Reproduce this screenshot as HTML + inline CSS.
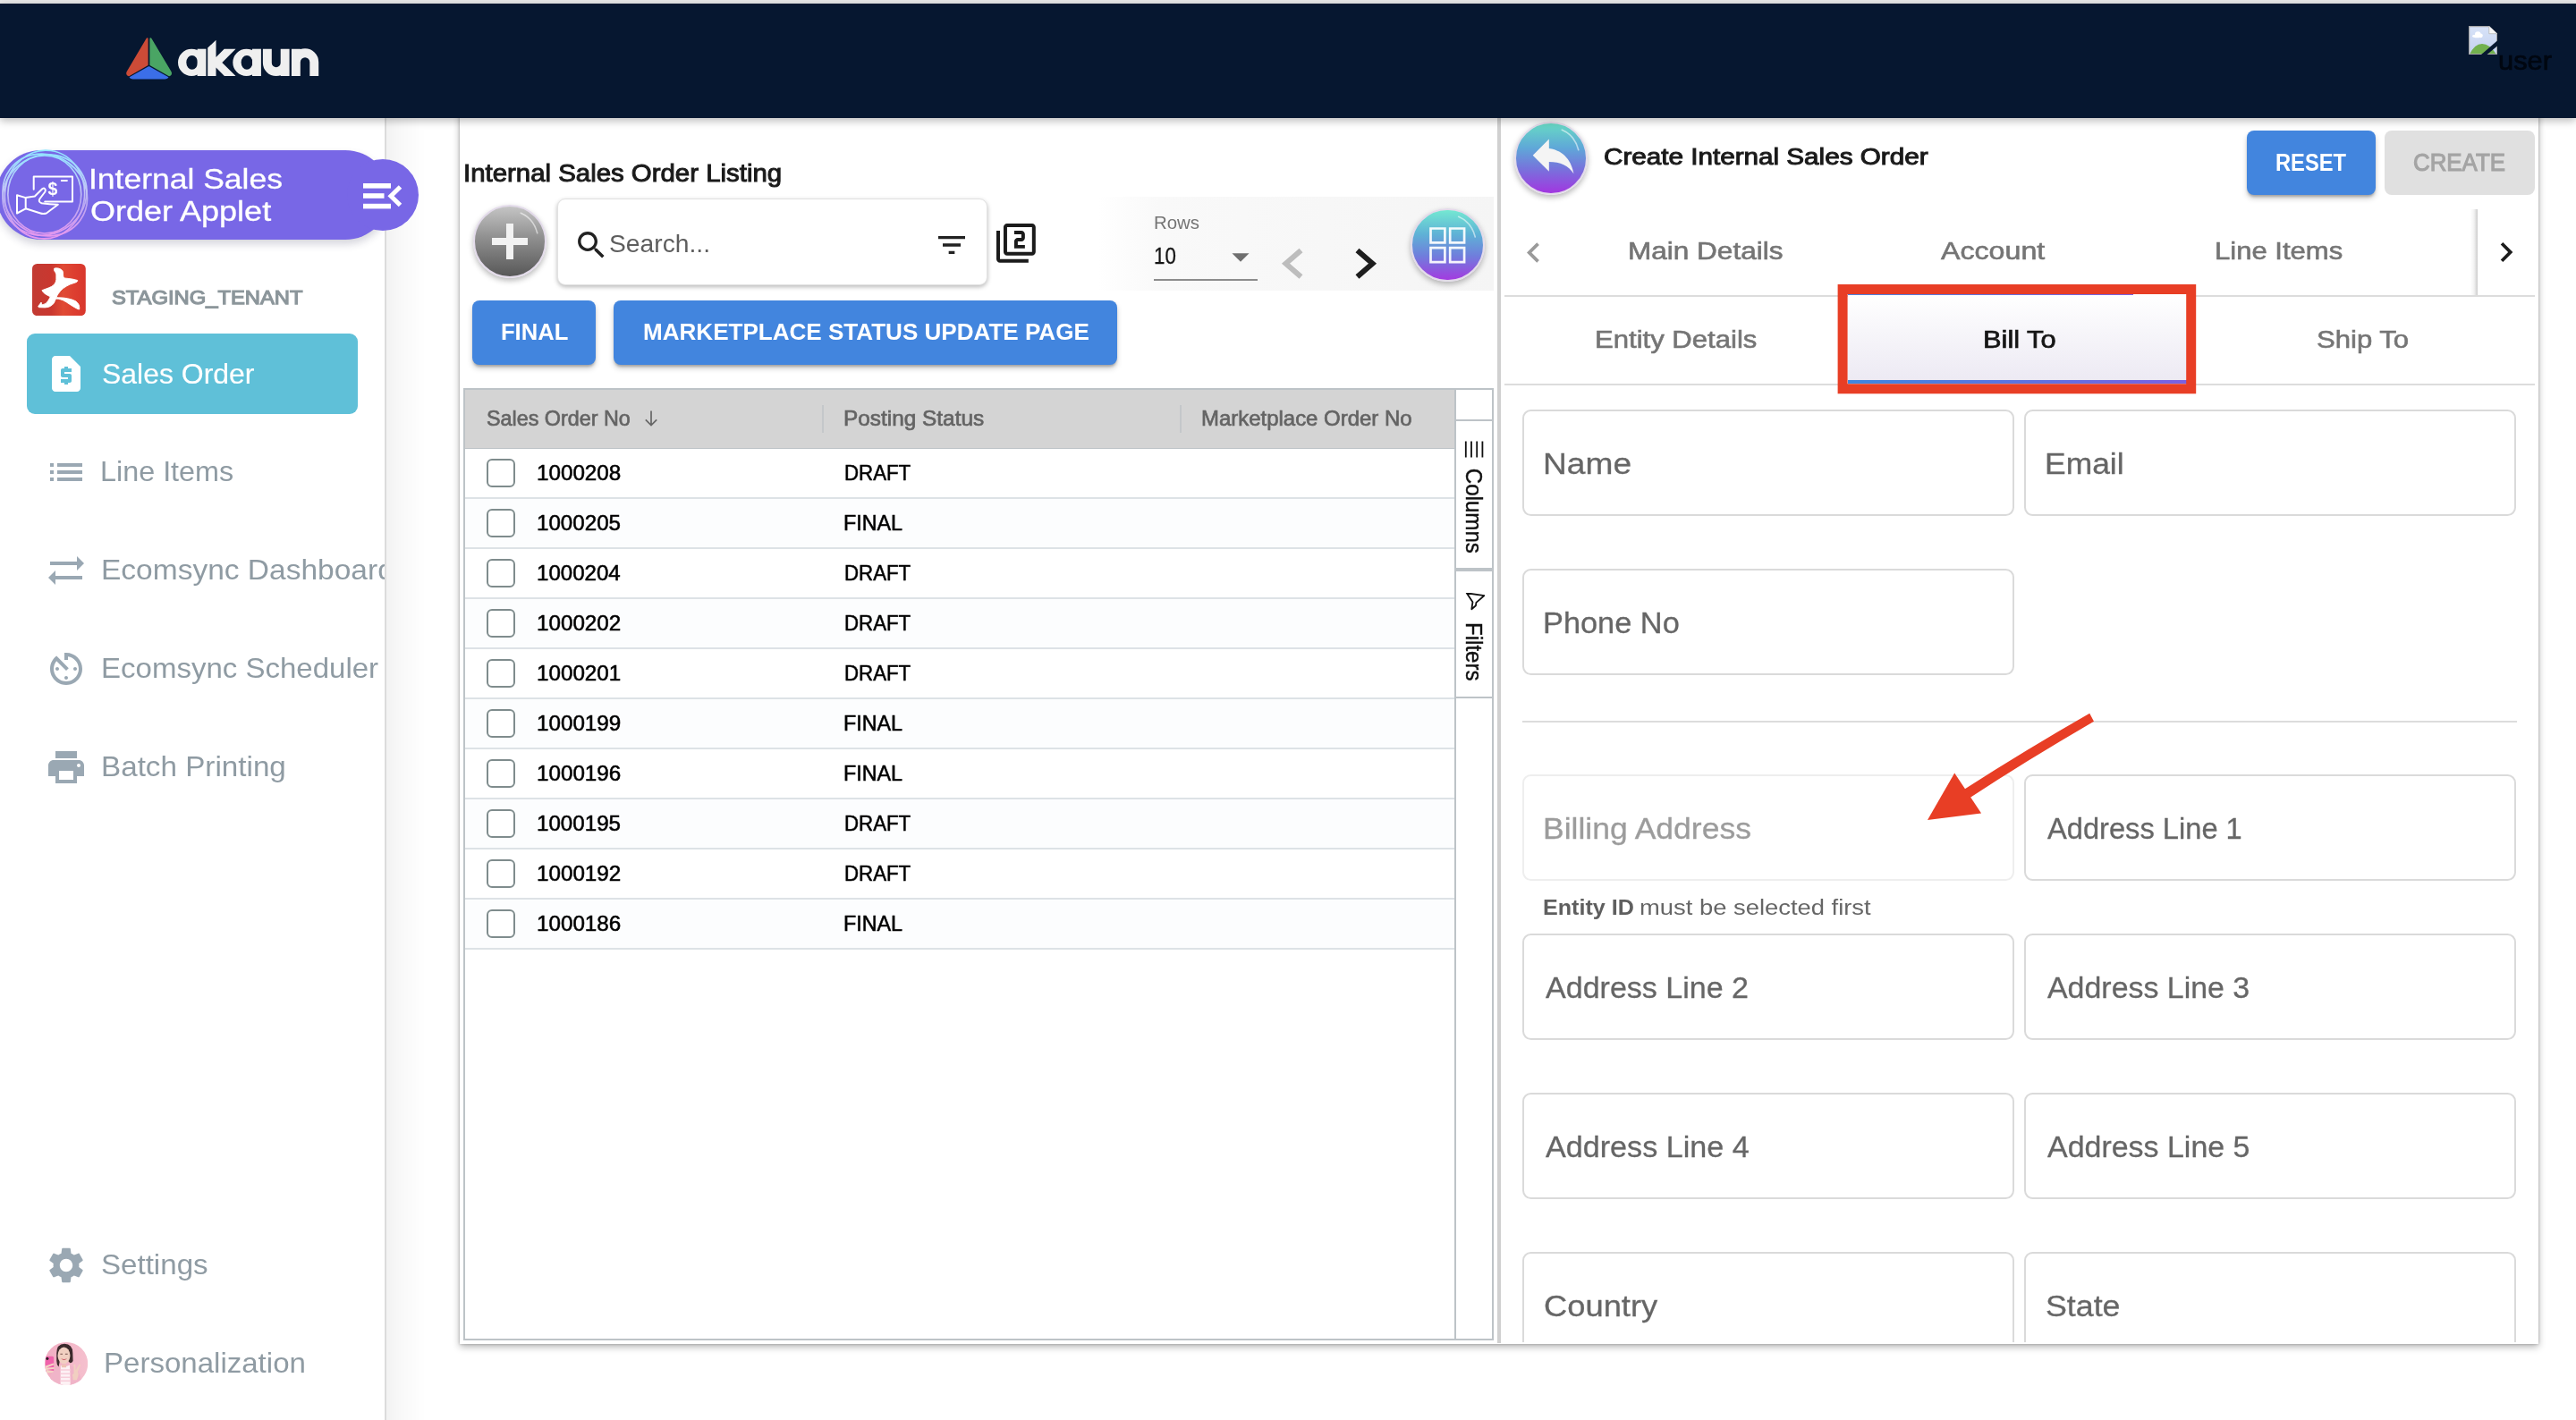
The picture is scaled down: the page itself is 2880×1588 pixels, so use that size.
<!DOCTYPE html>
<html lang="en"><head><meta charset="utf-8"><title>Internal Sales Order Applet</title>
<style>
html,body{margin:0;padding:0}
body{width:2880px;height:1588px;overflow:hidden;position:relative;background:#fff;font-family:"Liberation Sans",sans-serif}
.t{position:absolute;white-space:nowrap;transform-origin:0 50%;display:block}
.fld{position:absolute;box-sizing:border-box;border:2px solid #dadada;border-radius:9.5px;background:#fff}
.row{position:absolute;left:0;width:1106px;height:56px;box-sizing:border-box;border-bottom:2px solid #dde2e6}
.cb{position:absolute;left:24.3px;top:11.2px;width:31.6px;height:31.6px;box-sizing:border-box;border:2px solid #7f8c8d;border-radius:6px;background:#fff}
.btn{position:absolute;border-radius:8px;background:#4285de;box-shadow:0 3px 3px -1px rgba(0,0,0,.25),0 4px 6px rgba(0,0,0,.18)}
</style></head><body>
<div id="app" style="position:absolute;left:0;top:0;width:2880px;height:1588px;will-change:transform">
<div style="position:absolute;left:0px;top:132px;width:430px;height:1456px;background:#fff;border-right:2px solid #dcdcdc"></div>
<div style="position:absolute;left:432px;top:132px;width:44px;height:1456px;background:linear-gradient(90deg,rgba(0,0,0,.05),rgba(0,0,0,.025) 40%,rgba(0,0,0,0))"></div>
<div style="position:absolute;left:514px;top:100px;width:2324.3px;height:1402.6px;background:#fff;box-shadow:0 3px 8px rgba(0,0,0,.3),0 0 3px rgba(0,0,0,.24)"></div>
<span class="t" style="left:518.4px;top:180.1px;font-size:28px;line-height:28px;color:#1a1a1a;-webkit-text-stroke:1.0px #1a1a1a;transform:scaleX(1.0496);">Internal Sales Order Listing</span>
<div style="position:absolute;left:1104px;top:220px;width:566px;height:105px;background:linear-gradient(90deg,#fff 0%,#fff 22%,#f9f9f9 34%,#f5f5f5 100%)"></div>
<div style="position:absolute;left:529px;top:229px;width:82px;height:82px;border-radius:50%;box-sizing:border-box;border:2px solid #e3dbea;background:linear-gradient(180deg,#c4c4c4 0%,#8f8f8f 45%,#585858 100%);box-shadow:0 3px 6px rgba(0,0,0,.28)"><svg style="position:absolute;left:-2px;top:-2px" width="82" height="82" viewBox="0 0 80 80"><path d="M52 9 Q66 15 70 31" fill="none" stroke="rgba(255,255,255,.55)" stroke-width="1.6" stroke-linecap="round"/><path d="M40 20.5v39M20.5 40h39" stroke="#f2f2f2" stroke-width="7.8" fill="none"/></svg></div>
<div style="position:absolute;left:623px;top:221.6px;width:481.4px;height:97.2px;background:#fff;border-radius:9px;border:1.4px solid #e2e2e2;box-sizing:border-box;box-shadow:0 2px 5px rgba(0,0,0,.28)"></div>
<svg style="position:absolute;left:640.5px;top:253.9px;" width="40.5" height="40.5" viewBox="0 0 24 24"><path fill="#222" d="M15.5 14h-.79l-.28-.27C15.41 12.59 16 11.11 16 9.5 16 5.91 13.09 3 9.5 3S3 5.91 3 9.5 5.91 16 9.5 16c1.61 0 3.09-.59 4.23-1.57l.27.28v.79l5 4.99L20.49 19l-4.99-5zm-6 0C7.01 14 5 11.99 5 9.5S7.01 5 9.5 5 14 7.01 14 9.5 11.99 14 9.5 14z"/></svg>
<span class="t" style="left:681.1px;top:258.7px;font-size:27.5px;line-height:27.5px;color:#5e5e5e;transform:scaleX(1.0268);">Search...</span>
<svg style="position:absolute;left:1043.8px;top:254.2px;" width="40" height="40" viewBox="0 0 24 24"><path fill="#222" d="M10 18h4v-2h-4v2zM3 6v2h18V6H3zm3 7h12v-2H6v2z"/></svg>
<svg style="position:absolute;left:1112px;top:247.6px;" width="47.8" height="47.8" viewBox="0 0 24 24"><path fill="#1b1b1b" d="M3 5H1v16c0 1.1.9 2 2 2h16v-2H3V5zm18-4H7c-1.1 0-2 .9-2 2v14c0 1.1.9 2 2 2h14c1.1 0 2-.9 2-2V3c0-1.1-.9-2-2-2zm0 16H7V3h14v14zm-4-4h-4v-2h2c1.1 0 2-.89 2-2V7c0-1.11-.9-2-2-2h-4v2h4v2h-2c-1.1 0-2 .89-2 2v4h6v-2z"/></svg>
<span class="t" style="left:1289.9px;top:239.8px;font-size:19.5px;line-height:19.5px;color:#757575;transform:scaleX(1.0472);">Rows</span>
<span class="t" style="left:1289.9px;top:273.8px;font-size:25px;line-height:25px;color:#151515;-webkit-text-stroke:0.3px #151515;transform:scaleX(0.8920);">10</span>
<svg style="position:absolute;left:1364.4px;top:264px;" width="46" height="46" viewBox="0 0 24 24"><path fill="#6f6f6f" d="M7 10l5 5 5-5z"/></svg>
<div style="position:absolute;left:1290px;top:312px;width:116px;height:2px;background:#8c8c8c"></div>
<svg style="position:absolute;left:1428px;top:272px" width="120" height="46" viewBox="0 0 120 46"><path d="M26.5 8 L9.5 22.8 L26.5 37.6" fill="none" stroke="#bdbdbd" stroke-width="6"/><path d="M89.5 8 L106.5 22.8 L89.5 37.6" fill="none" stroke="#1e1e1e" stroke-width="6"/></svg>
<div style="position:absolute;left:1577.0px;top:232.7px;width:82.6px;height:82.6px;border-radius:50%;box-sizing:border-box;border:2px solid #e3dbea;background:linear-gradient(180deg,#74e8d2 0%,#5fb1d6 35%,#6f7fdc 65%,#a33be0 100%);box-shadow:0 3px 6px rgba(0,0,0,.28)"><svg style="position:absolute;left:-2px;top:-2px" width="82.6" height="82.6" viewBox="0 0 80 80"><path d="M52 9 Q66 15 70 31" fill="none" stroke="rgba(255,255,255,.55)" stroke-width="1.6" stroke-linecap="round"/><path fill="#fff" fill-opacity=".92" d="M20.5 20.5v18h18v-18zm15.4 15.4h-12.8v-12.8h12.8zM41.5 20.5v18h18v-18zm15.4 15.4h-12.8v-12.8h12.8zM20.5 41.5v18h18v-18zm15.4 15.4h-12.8v-12.8h12.8zM41.5 41.5v18h18v-18zm15.4 15.4h-12.8v-12.8h12.8z"/></svg></div>
<div class="btn" style="left:528px;top:336px;width:138px;height:72px"></div>
<span class="t" style="left:560.0px;top:358.3px;font-size:26.5px;line-height:26.5px;color:#fff;font-weight:bold;transform:scaleX(0.9647);">FINAL</span>
<div class="btn" style="left:686px;top:336px;width:563px;height:72px"></div>
<span class="t" style="left:718.5px;top:358.3px;font-size:26.5px;line-height:26.5px;color:#fff;font-weight:bold;transform:scaleX(0.9830);">MARKETPLACE STATUS UPDATE PAGE</span>
<div style="position:absolute;left:518px;top:434px;width:1148px;height:1061px;border:2px solid #bdc3c7;background:#fff;overflow:hidden"><div style="position:absolute;left:0px;top:0px;width:1106px;height:64.5px;background:#d4d4d4"></div>
<div style="position:absolute;left:0px;top:64.5px;width:1106px;height:1.8px;background:#bdc3c7"></div>
<div style="position:absolute;left:399px;top:17px;width:2px;height:31px;background:#c4c7ca"></div>
<div style="position:absolute;left:799px;top:17px;width:2px;height:31px;background:#c4c7ca"></div>
<div class="row" style="top:66px;background:#fff"><div class="cb"></div></div>
<div class="row" style="top:122px;background:#fcfdfe"><div class="cb"></div></div>
<div class="row" style="top:178px;background:#fff"><div class="cb"></div></div>
<div class="row" style="top:234px;background:#fcfdfe"><div class="cb"></div></div>
<div class="row" style="top:290px;background:#fff"><div class="cb"></div></div>
<div class="row" style="top:346px;background:#fcfdfe"><div class="cb"></div></div>
<div class="row" style="top:402px;background:#fff"><div class="cb"></div></div>
<div class="row" style="top:458px;background:#fcfdfe"><div class="cb"></div></div>
<div class="row" style="top:514px;background:#fff"><div class="cb"></div></div>
<div class="row" style="top:570px;background:#fcfdfe"><div class="cb"></div></div>
<div style="position:absolute;left:1106px;top:0px;width:2px;height:1061px;background:#bdc3c7"></div>
<div style="position:absolute;left:1108px;top:33px;width:40px;height:1.6px;background:#bdc3c7"></div>
<div style="position:absolute;left:1108px;top:198.8px;width:40px;height:4px;background:#bdc3c7"></div>
<div style="position:absolute;left:1108px;top:343.4px;width:40px;height:1.8px;background:#bdc3c7"></div>
</div>
<span class="t" style="left:543.5px;top:455.8px;font-size:24.3px;line-height:24.3px;color:#646464;-webkit-text-stroke:0.7px #646464;transform:scaleX(0.9596);">Sales Order No</span>
<svg style="position:absolute;left:719px;top:458px" width="18" height="20" viewBox="0 0 18 20"><path d="M9 1.5V17.5M2.8 11.3L9 17.5L15.2 11.3" fill="none" stroke="#666" stroke-width="1.7"/></svg>
<span class="t" style="left:942.9px;top:455.8px;font-size:24.3px;line-height:24.3px;color:#646464;-webkit-text-stroke:0.7px #646464;transform:scaleX(1.0031);">Posting Status</span>
<span class="t" style="left:1342.9px;top:455.8px;font-size:24.3px;line-height:24.3px;color:#646464;-webkit-text-stroke:0.7px #646464;transform:scaleX(0.9856);">Marketplace Order No</span>
<span class="t" style="left:599.7px;top:517.3px;font-size:24px;line-height:24px;color:#000;-webkit-text-stroke:0.55px #000;transform:scaleX(1.0085);">1000208</span>
<span class="t" style="left:943.5px;top:517.8px;font-size:23.7px;line-height:23.7px;color:#000;-webkit-text-stroke:0.55px #000;transform:scaleX(0.9399);">DRAFT</span>
<span class="t" style="left:599.7px;top:573.3px;font-size:24px;line-height:24px;color:#000;-webkit-text-stroke:0.55px #000;transform:scaleX(1.0058);">1000205</span>
<span class="t" style="left:943.4px;top:573.8px;font-size:23.7px;line-height:23.7px;color:#000;-webkit-text-stroke:0.55px #000;transform:scaleX(0.9843);">FINAL</span>
<span class="t" style="left:599.7px;top:629.3px;font-size:24px;line-height:24px;color:#000;-webkit-text-stroke:0.55px #000;transform:scaleX(1.0032);">1000204</span>
<span class="t" style="left:943.5px;top:629.8px;font-size:23.7px;line-height:23.7px;color:#000;-webkit-text-stroke:0.55px #000;transform:scaleX(0.9399);">DRAFT</span>
<span class="t" style="left:599.7px;top:685.3px;font-size:24px;line-height:24px;color:#000;-webkit-text-stroke:0.55px #000;transform:scaleX(1.0085);">1000202</span>
<span class="t" style="left:943.5px;top:685.8px;font-size:23.7px;line-height:23.7px;color:#000;-webkit-text-stroke:0.55px #000;transform:scaleX(0.9399);">DRAFT</span>
<span class="t" style="left:599.7px;top:741.3px;font-size:24px;line-height:24px;color:#000;-webkit-text-stroke:0.55px #000;transform:scaleX(1.0085);">1000201</span>
<span class="t" style="left:943.5px;top:741.8px;font-size:23.7px;line-height:23.7px;color:#000;-webkit-text-stroke:0.55px #000;transform:scaleX(0.9399);">DRAFT</span>
<span class="t" style="left:599.7px;top:797.3px;font-size:24px;line-height:24px;color:#000;-webkit-text-stroke:0.55px #000;transform:scaleX(1.0085);">1000199</span>
<span class="t" style="left:943.4px;top:797.8px;font-size:23.7px;line-height:23.7px;color:#000;-webkit-text-stroke:0.55px #000;transform:scaleX(0.9843);">FINAL</span>
<span class="t" style="left:599.7px;top:853.3px;font-size:24px;line-height:24px;color:#000;-webkit-text-stroke:0.55px #000;transform:scaleX(1.0085);">1000196</span>
<span class="t" style="left:943.4px;top:853.8px;font-size:23.7px;line-height:23.7px;color:#000;-webkit-text-stroke:0.55px #000;transform:scaleX(0.9843);">FINAL</span>
<span class="t" style="left:599.7px;top:909.3px;font-size:24px;line-height:24px;color:#000;-webkit-text-stroke:0.55px #000;transform:scaleX(1.0058);">1000195</span>
<span class="t" style="left:943.5px;top:909.8px;font-size:23.7px;line-height:23.7px;color:#000;-webkit-text-stroke:0.55px #000;transform:scaleX(0.9399);">DRAFT</span>
<span class="t" style="left:599.7px;top:965.3px;font-size:24px;line-height:24px;color:#000;-webkit-text-stroke:0.55px #000;transform:scaleX(1.0085);">1000192</span>
<span class="t" style="left:943.5px;top:965.8px;font-size:23.7px;line-height:23.7px;color:#000;-webkit-text-stroke:0.55px #000;transform:scaleX(0.9399);">DRAFT</span>
<span class="t" style="left:599.7px;top:1021.3px;font-size:24px;line-height:24px;color:#000;-webkit-text-stroke:0.55px #000;transform:scaleX(1.0085);">1000186</span>
<span class="t" style="left:943.4px;top:1021.8px;font-size:23.7px;line-height:23.7px;color:#000;-webkit-text-stroke:0.55px #000;transform:scaleX(0.9843);">FINAL</span>
<svg style="position:absolute;left:1637px;top:493px" width="22" height="19" viewBox="0 0 22 19"><path d="M1.8 0.5v18M8 0.5v18M14.2 0.5v18M20.4 0.5v18" stroke="#111" stroke-width="1.8" fill="none"/></svg>
<span class="t" style="left:1638.4px;top:525px;font-size:25.8px;line-height:25.8px;color:#111;-webkit-text-stroke:.4px #111;transform-origin:0 0;transform:rotate(90deg) translate(-1.20px,-21.8px) scaleX(0.9338)">Columns</span>
<svg style="position:absolute;left:1637px;top:663px" width="23" height="20" viewBox="0 0 23 20"><path d="M1.5 1.5H21.5L13.5 10.5V14L9.5 18.5V10.5Z" fill="none" stroke="#111" stroke-width="1.8" stroke-linejoin="round" transform="rotate(8 11 10)"/></svg>
<span class="t" style="left:1638.4px;top:698px;font-size:25.8px;line-height:25.8px;color:#111;-webkit-text-stroke:.4px #111;transform-origin:0 0;transform:rotate(90deg) translate(-1.92px,-21.8px) scaleX(0.9317)">Filters</span>
<div style="position:absolute;left:1673.8px;top:132px;width:4.2px;height:1370px;background:#d0d0d0"></div>
<div style="position:absolute;left:1693px;top:135.5px;width:82px;height:82px;border-radius:50%;box-sizing:border-box;border:2px solid #e3dbea;background:linear-gradient(180deg,#67d9c4 0%,#5fa8d8 35%,#7773dc 65%,#a236e0 100%);box-shadow:0 3px 6px rgba(0,0,0,.28)"><svg style="position:absolute;left:-2px;top:-2px" width="82" height="82" viewBox="0 0 80 80"><path d="M52 9 Q66 15 70 31" fill="none" stroke="rgba(255,255,255,.55)" stroke-width="1.6" stroke-linecap="round"/><path fill="#f4f4f4" d="M37.5 31.5V20.5L18.5 39.5L37.5 58.5V47.3C51 47.3 60 51.5 66.5 61C64 47.5 56 34 37.5 31.5Z" transform="translate(3 0) scale(.93)"/></svg></div>
<span class="t" style="left:1793.0px;top:162.2px;font-size:26px;line-height:26px;color:#1a1a1a;-webkit-text-stroke:1.0px #1a1a1a;transform:scaleX(1.1402);">Create Internal Sales Order</span>
<div class="btn" style="left:2512px;top:146px;width:144px;height:72px"></div>
<span class="t" style="left:2544.3px;top:167.7px;font-size:27.5px;line-height:27.5px;color:#fff;font-weight:bold;transform:scaleX(0.8615);">RESET</span>
<div style="position:absolute;left:2666px;top:146px;width:168px;height:72px;background:#e0e0e0;border-radius:8px"></div>
<span class="t" style="left:2697.8px;top:167.7px;font-size:27.5px;line-height:27.5px;color:#a4a4a4;-webkit-text-stroke:1.1px #a4a4a4;transform:scaleX(0.9408);">CREATE</span>
<svg style="position:absolute;left:1692.1px;top:259.5px;" width="45" height="45" viewBox="0 0 24 24"><path fill="#9a9a9a" d="M15.41 7.41L14 6l-6 6 6 6 1.41-1.41L10.83 12z"/></svg>
<span class="t" style="left:1819.6px;top:267.3px;font-size:27.5px;line-height:27.5px;color:#757575;-webkit-text-stroke:0.6px #757575;transform:scaleX(1.1463);">Main Details</span>
<span class="t" style="left:2169.6px;top:267.1px;font-size:27.5px;line-height:27.5px;color:#757575;-webkit-text-stroke:0.6px #757575;transform:scaleX(1.1695);">Account</span>
<span class="t" style="left:2475.5px;top:267.1px;font-size:27.5px;line-height:27.5px;color:#757575;-webkit-text-stroke:0.6px #757575;transform:scaleX(1.1290);">Line Items</span>
<div style="position:absolute;left:1682px;top:330px;width:1152px;height:2px;background:#dcdcdc"></div>
<div style="position:absolute;left:2066px;top:326.8px;width:319px;height:3.8px;background:linear-gradient(90deg,#4a84df,#7a62e2)"></div>
<div style="position:absolute;left:2762px;top:234px;width:8px;height:96px;background:linear-gradient(90deg,rgba(0,0,0,0),rgba(0,0,0,.05) 50%,rgba(0,0,0,.2))"></div>
<div style="position:absolute;left:2770px;top:234px;width:64px;height:96px;background:#fff"></div>
<svg style="position:absolute;left:2779.6px;top:260.4px;" width="44" height="44" viewBox="0 0 24 24"><path fill="#1c1c1c" d="M10 6L8.59 7.41 13.17 12l-4.58 4.59L10 18l6-6z"/></svg>
<div style="position:absolute;left:1682px;top:428.5px;width:1152px;height:2px;background:#dcdcdc"></div>
<span class="t" style="left:1782.8px;top:365.7px;font-size:27.5px;line-height:27.5px;color:#757575;-webkit-text-stroke:0.6px #757575;transform:scaleX(1.1303);">Entity Details</span>
<div style="position:absolute;left:2065.5px;top:330px;width:379px;height:98.5px;background:linear-gradient(180deg,#fff 0%,#f7f6fa 40%,#ece9f3 100%)"></div>
<div style="position:absolute;left:2065.5px;top:424.5px;width:379px;height:4.5px;background:linear-gradient(90deg,#3f86df,#7a60e2)"></div>
<span class="t" style="left:2216.8px;top:365.7px;font-size:27.5px;line-height:27.5px;color:#161616;-webkit-text-stroke:0.7px #161616;transform:scaleX(1.1211);">Bill To</span>
<span class="t" style="left:2590.2px;top:365.7px;font-size:27.5px;line-height:27.5px;color:#757575;-webkit-text-stroke:0.6px #757575;transform:scaleX(1.1303);">Ship To</span>
<svg style="position:absolute;left:2040px;top:305px" width="430" height="150" viewBox="2040 305 430 150"><rect x="2060.1" y="323.5" width="389.6" height="111.3" fill="none" stroke="#e83e25" stroke-width="11"/></svg>
<div style="position:absolute;left:1679px;top:132px;width:1159px;height:1368.5px;overflow:hidden"><div class="fld" style="left:23.299999999999955px;top:326.1px;width:550.2px;height:119px;"></div>
<span class="t" style="left:46.0px;top:370.0px;font-size:33px;line-height:33px;color:#666;-webkit-text-stroke:0.3px #666;transform:scaleX(1.1250);">Name</span>
<div class="fld" style="left:584.0999999999999px;top:326.1px;width:550.2px;height:119px"></div>
<span class="t" style="left:607.2px;top:370.0px;font-size:33px;line-height:33px;color:#666;-webkit-text-stroke:0.3px #666;transform:scaleX(1.0734);">Email</span>
<div class="fld" style="left:23.299999999999955px;top:503.9px;width:550.2px;height:119px;"></div>
<span class="t" style="left:46.2px;top:547.8px;font-size:33px;line-height:33px;color:#666;-webkit-text-stroke:0.3px #666;transform:scaleX(1.0407);">Phone No</span>
<div class="fld" style="left:23.299999999999955px;top:734.2px;width:550.2px;height:119px;border-color:#eeeeee;"></div>
<span class="t" style="left:46.1px;top:778.1px;font-size:33px;line-height:33px;color:#9c9c9c;-webkit-text-stroke:0.3px #9c9c9c;transform:scaleX(1.0761);">Billing Address</span>
<div class="fld" style="left:584.0999999999999px;top:734.2px;width:550.2px;height:119px"></div>
<span class="t" style="left:610.1px;top:778.1px;font-size:33px;line-height:33px;color:#666;-webkit-text-stroke:0.3px #666;transform:scaleX(0.9892);">Address Line 1</span>
<div class="fld" style="left:23.299999999999955px;top:912px;width:550.2px;height:119px;"></div>
<span class="t" style="left:48.9px;top:955.9px;font-size:33px;line-height:33px;color:#666;-webkit-text-stroke:0.3px #666;transform:scaleX(1.0313);">Address Line 2</span>
<div class="fld" style="left:584.0999999999999px;top:912px;width:550.2px;height:119px"></div>
<span class="t" style="left:610.1px;top:955.9px;font-size:33px;line-height:33px;color:#666;-webkit-text-stroke:0.3px #666;transform:scaleX(1.0276);">Address Line 3</span>
<div class="fld" style="left:23.299999999999955px;top:1089.8px;width:550.2px;height:119px;"></div>
<span class="t" style="left:48.9px;top:1133.7px;font-size:33px;line-height:33px;color:#666;-webkit-text-stroke:0.3px #666;transform:scaleX(1.0346);">Address Line 4</span>
<div class="fld" style="left:584.0999999999999px;top:1089.8px;width:550.2px;height:119px"></div>
<span class="t" style="left:610.1px;top:1133.7px;font-size:33px;line-height:33px;color:#666;-webkit-text-stroke:0.3px #666;transform:scaleX(1.0288);">Address Line 5</span>
<div class="fld" style="left:23.299999999999955px;top:1267.6px;width:550.2px;height:119px;"></div>
<span class="t" style="left:47.1px;top:1311.5px;font-size:33px;line-height:33px;color:#666;-webkit-text-stroke:0.3px #666;transform:scaleX(1.1006);">Country</span>
<div class="fld" style="left:584.0999999999999px;top:1267.6px;width:550.2px;height:119px"></div>
<span class="t" style="left:608.3px;top:1311.5px;font-size:33px;line-height:33px;color:#666;-webkit-text-stroke:0.3px #666;transform:scaleX(1.0836);">State</span>
<div style="position:absolute;left:23.299999999999955px;top:674px;width:1112px;height:2px;background:#dcdcdc"></div>
<span class="t" style="left:46.0px;top:872.0px;font-size:23px;line-height:23px;color:#5f5f5f;font-weight:bold;transform:scaleX(1.0914);">Entity ID</span>
<span class="t" style="left:153.9px;top:872.0px;font-size:23px;line-height:23px;color:#666;transform:scaleX(1.1902);">must be selected first</span>
</div>
<svg style="position:absolute;left:2140px;top:790px" width="220" height="140" viewBox="0 0 220 140"><path d="M196.2 7.8Q123.6 49.3 53.3 94.6L59.5 104.1Q129.1 58.5 201 16.7Z" fill="#e83e25"/><path d="M15 126.9L45.2 74.5L75.1 119.6Z" fill="#e83e25"/></svg>
<div style="position:absolute;left:-4px;top:168px;width:440px;height:100px;background:#7867e6;border-radius:50px;box-shadow:0 5px 10px rgba(40,40,80,.2)"></div>
<div style="position:absolute;left:388px;top:178px;width:80px;height:80px;background:#7867e6;border-radius:50%"></div>
<svg style="position:absolute;left:0px;top:166px" width="104" height="104" viewBox="0 0 104 104">
<defs><linearGradient id="rg" gradientUnits="userSpaceOnUse" x1="0" y1="2" x2="0" y2="102"><stop offset="0" stop-color="#8fe6ff"/><stop offset=".45" stop-color="#c3c6f7"/><stop offset=".6" stop-color="#b9a8f2"/><stop offset="1" stop-color="#ea96ee"/></linearGradient></defs>
<g fill="none" stroke="url(#rg)" stroke-width="1.7">
<path d="M90.71 26.56A48 44 -32 1 0 9.29 77.44A48 44 -32 1 0 90.71 26.56Z"/>
<path d="M89.54 80.51A48.5 44.5 36 1 0 11.06 23.49A48.5 44.5 36 1 0 89.54 80.51Z"/>
<path d="M94.07 57.69A44.5 49.5 8 1 0 5.93 45.31A44.5 49.5 8 1 0 94.07 57.69Z"/>
<path d="M90.80 51.50A41 43.5 0 1 0 8.80 51.50A41 43.5 0 1 0 90.80 51.50Z"/>
</g>
<g fill="none" stroke="#fff" stroke-width="2" stroke-linejoin="round" stroke-linecap="round">
<path d="M37.7 45.8V31.4H81V59.4H50.2"/>
<path d="M68.8 36.1H74.9"/>
<path d="M19 52.3L28.7 55.1V67.3L19 72.5Z"/>
<path d="M28.7 55.1L38.9 53.5L47.5 45Q50 43.5 50.8 46.5Q51 47.5 50 49L44.3 56.5Q42.5 60 46.6 61.2Q55 62.5 64.8 62.8L51.8 72.5Q48 73.5 45.3 72.5L28.7 67.3"/>
</g>
<text x="53.6" y="52" font-family="Liberation Sans" font-weight="bold" font-size="19.5" fill="#fff">$</text>
</svg>
<span class="t" style="left:99.0px;top:185.0px;font-size:31.3px;line-height:31.3px;color:#fff;-webkit-text-stroke:0.3px #fff;transform:scaleX(1.1337);">Internal Sales</span>
<span class="t" style="left:100.5px;top:221.2px;font-size:31.3px;line-height:31.3px;color:#fff;-webkit-text-stroke:0.3px #fff;transform:scaleX(1.1504);">Order Applet</span>
<svg style="position:absolute;left:404px;top:202px" width="48" height="34" viewBox="0 0 48 34">
<g fill="#fff"><rect x="2" y="3" width="31" height="5.6"/><rect x="2" y="14.2" width="23.5" height="5.6"/><rect x="2" y="25.8" width="31" height="5.6"/></g>
<path d="M43.5 7 L33 17.2 L43.5 27.5" fill="none" stroke="#fff" stroke-width="5"/>
</svg>
<svg style="position:absolute;left:36.1px;top:294.8px" width="59.8" height="58.1" viewBox="0 0 59.8 58.1">
<defs><linearGradient id="tg" x1="0" y1="0" x2="1" y2="0"><stop offset="0" stop-color="#c23b33"/><stop offset=".35" stop-color="#c9372f"/><stop offset=".58" stop-color="#e04a34"/><stop offset=".8" stop-color="#dd3e30"/><stop offset="1" stop-color="#d8372c"/></linearGradient></defs>
<rect width="59.8" height="58.1" rx="5.5" fill="url(#tg)"/>
<path fill="#fff" stroke="#fff" stroke-width=".9" stroke-linejoin="round" d="M24.8 5.1Q27 4.6 29.4 5.1Q33 6 34 7.9Q34.8 10 34.5 12.9Q34.8 15 36 16Q40 16.4 44.6 17L50.7 18.5Q51 19.5 49.7 20.5Q46 21.8 42.1 23.1Q38 25 34.5 27.6Q31.5 30 29.4 33.2Q27.8 35.5 26.9 37.8Q28 37.6 29.4 37.8Q35 37.8 39.6 38.8Q45 39.8 48.7 41.8Q51 43.5 52.2 45.9Q53 48.5 52.7 51Q51 50.8 49.7 50Q46 48 42.1 45.4Q38 42.6 34.5 40.8Q32 39.8 29.4 39.3L26.5 39Q25.5 41.5 24.3 43.9Q22.5 46.5 19.3 47.9Q17 48.7 14.2 48.9L7.6 48.7Q6.5 48.3 6.8 47.4L10.1 43.1L10.6 45.9Q13 45.5 15.2 44.4Q17.8 42 19.3 38.8L20.3 36.8Q18 35.8 16.2 34.7Q14 33.5 12.7 32.2L10.9 29.7L15.2 28.1Q18.5 27 21.3 25.6Q24 24.2 25.4 22.1Q26.7 20 26.9 17.5L26.9 11.9Q26.3 9.5 24.8 7.9Q24.2 6.3 24.8 5.1Z"/>
</svg>
<span class="t" style="left:124.6px;top:321.9px;font-size:22.6px;line-height:22.6px;color:#8c969b;-webkit-text-stroke:1.25px #8c969b;transform:scaleX(1.0516);">STAGING_TENANT</span>
<div style="position:absolute;left:30px;top:373px;width:370px;height:90px;background:#5fc0d8;border-radius:9px"></div>
<svg style="position:absolute;left:50px;top:394px;" width="48" height="48" viewBox="0 0 24 24"><path fill="#fff" d="M14 2H6c-1.1 0-2 .9-2 2v16c0 1.1.9 2 2 2h12c1.1 0 2-.9 2-2V8l-6-6zm1 9h-4v1h3c.55 0 1 .45 1 1v3c0 .55-.45 1-1 1h-1v1h-2v-1H9v-2h4v-1h-3c-.55 0-1-.45-1-1v-3c0-.55.45-1 1-1h1V8h2v1h2v2z"/></svg>
<span class="t" style="left:113.5px;top:402.5px;font-size:30.5px;line-height:30.5px;color:#fff;-webkit-text-stroke:0.15px #fff;transform:scaleX(1.0474);">Sales Order</span>
<svg style="position:absolute;left:50px;top:503.6px;" width="48" height="48" viewBox="0 0 24 24"><path fill="#9aa8b3" d="M3 13h2v-2H3v2zm0 4h2v-2H3v2zm0-8h2V7H3v2zm4 4h14v-2H7v2zm0 4h14v-2H7v2zM7 7v2h14V7H7z"/></svg>
<span class="t" style="left:112.2px;top:512.2px;font-size:30.5px;line-height:30.5px;color:#8f9ba3;transform:scaleX(1.0603);">Line Items</span>
<svg style="position:absolute;left:50px;top:614px;" width="48" height="48" viewBox="0 0 24 24"><path fill="#9aa8b3" d="M22 8l-4-4v3H3v2h15v3l4-4zM2 16l4 4v-3h15v-2H6v-3l-4 4z"/></svg>
<div style="position:absolute;left:114px;top:600px;width:316px;height:70px;overflow:hidden"><span class="t" style="left:-1.2px;top:22.2px;font-size:30.5px;line-height:30.5px;color:#8f9ba3;transform:scaleX(1.0986);">Ecomsync Dashboard</span>
</div>
<svg style="position:absolute;left:50px;top:724px;" width="48" height="48" viewBox="0 0 24 24"><path fill="#9aa8b3" d="M11 17c0 .55.45 1 1 1s1-.45 1-1-.45-1-1-1-1 .45-1 1zm0-14v4h2V5.08c3.39.49 6 3.39 6 6.92 0 3.87-3.13 7-7 7s-7-3.13-7-7c0-1.68.59-3.22 1.58-4.42L12 13l1.41-1.41-6.8-6.8v.02C4.42 6.45 3 9.05 3 12c0 4.97 4.02 9 9 9 4.97 0 9-4.03 9-9s-4.03-9-9-9h-1zm7 9c0-.55-.45-1-1-1s-1 .45-1 1 .45 1 1 1 1-.45 1-1zM6 12c0 .55.45 1 1 1s1-.45 1-1-.45-1-1-1-1 .45-1 1z"/></svg>
<span class="t" style="left:112.9px;top:731.9px;font-size:30.5px;line-height:30.5px;color:#8f9ba3;transform:scaleX(1.0823);">Ecomsync Scheduler</span>
<svg style="position:absolute;left:50px;top:834px;" width="48" height="48" viewBox="0 0 24 24"><path fill="#9aa8b3" d="M19 8H5c-1.66 0-3 1.34-3 3v6h4v4h12v-4h4v-6c0-1.66-1.34-3-3-3zm-3 11H8v-5h8v5zm3-7c-.55 0-1-.45-1-1s.45-1 1-1 1 .45 1 1-.45 1-1 1zm-1-9H6v4h12V3z"/></svg>
<span class="t" style="left:113.1px;top:841.9px;font-size:30.5px;line-height:30.5px;color:#8f9ba3;transform:scaleX(1.0893);">Batch Printing</span>
<svg style="position:absolute;left:50px;top:1391px;" width="48" height="48" viewBox="0 0 24 24"><path fill="#9aa8b3" d="M19.14 12.94c.04-.3.06-.61.06-.94 0-.32-.02-.64-.07-.94l2.03-1.58c.18-.14.23-.41.12-.61l-1.92-3.32c-.12-.22-.37-.29-.59-.22l-2.39.96c-.5-.38-1.03-.7-1.62-.94l-.36-2.54c-.04-.24-.24-.41-.48-.41h-3.84c-.24 0-.43.17-.47.41l-.36 2.54c-.59.24-1.13.57-1.62.94l-2.39-.96c-.22-.08-.47 0-.59.22L2.74 8.87c-.12.21-.08.47.12.61l2.03 1.58c-.05.3-.09.63-.09.94s.02.64.07.94l-2.03 1.58c-.18.14-.23.41-.12.61l1.92 3.32c.12.22.37.29.59.22l2.39-.96c.5.38 1.03.7 1.62.94l.36 2.54c.05.24.24.41.48.41h3.84c.24 0 .44-.17.47-.41l.36-2.54c.59-.24 1.13-.56 1.62-.94l2.39.96c.22.08.47 0 .59-.22l1.92-3.32c.12-.22.07-.47-.12-.61l-2.01-1.58zM12 15.6c-1.98 0-3.6-1.62-3.6-3.6s1.62-3.6 3.6-3.6 3.6 1.62 3.6 3.6-1.62 3.6-3.6 3.6z"/></svg>
<span class="t" style="left:113.3px;top:1398.7px;font-size:30.5px;line-height:30.5px;color:#8f9ba3;transform:scaleX(1.0851);">Settings</span>
<svg style="position:absolute;left:49.9px;top:1501px" width="48.2" height="48.2" viewBox="0 0 48 48">
<defs><clipPath id="av"><circle cx="24" cy="24" r="24"/></clipPath>
<linearGradient id="avb" x1="0" y1="0" x2="1" y2="0"><stop offset="0" stop-color="#f1adc2"/><stop offset="1" stop-color="#f5c0ce"/></linearGradient></defs>
<g clip-path="url(#av)"><rect width="48" height="48" fill="url(#avb)"/>
<path d="M5 48Q6 30 16 26.5L22 25L30 26.5Q39 29 41.5 48Z" fill="#f0b4c8"/>
<path d="M17.7 26Q22 28.5 27.9 25.5L28.6 48H17.6Z" fill="#fdf1f4"/>
<path d="M17.6 31h11M17.6 35h11M17.6 39h11M17.6 43h11" stroke="#f7cdd9" stroke-width="1.5" fill="none"/>
<path d="M13.2 13Q13 2 22 1.8Q31 2 31.2 12L31.5 21Q30.5 23.5 28 23L25 20H17L15.5 27.5Q13 25 13.2 20Z" fill="#3b2a2c"/>
<ellipse cx="21.4" cy="14.8" rx="6.9" ry="9.2" fill="#f1cfc1"/>
<path d="M16 8.5Q21 3.5 27.5 8Q24 5.5 21.5 6Q19 6 16 8.5Z" fill="#3b2a2c"/>
<path d="M18.8 25h5.2v3.2h-5.2z" fill="#eec3b4"/>
<path d="M17.3 13.2h2.6M22.8 13.2h2.8" stroke="#7a5650" stroke-width="1.1" fill="none"/>
<path d="M18 18.3Q21.5 21.3 25 18.3Q21.5 19.6 18 18.3Z" fill="#c9525f"/>
<rect x="0.8" y="15.8" width="9.3" height="17.6" rx="1.6" fill="#ef62ab"/>
<circle cx="2.9" cy="18.3" r="1.5" fill="#2b1f25"/>
<path d="M1 26.5L9.5 23.3L10.8 24.8L2 28.5L10.5 27.8L10.8 29.6L2.2 31L10 31.8L9.6 33.6L2.5 34.4Q0.5 32 1 26.5Z" fill="#f3d3c5"/>
<path d="M32.4 35L32.3 25Q33.2 23.8 34.1 25L34.6 31L38.3 24.9Q39.5 24.3 40 25.6L36.8 32.5Q38.3 35.5 37 38.5L35.6 42H31.6L31.2 38Q30 35.5 32.4 35Z" fill="#f1cfc1"/>
</g></svg>
<span class="t" style="left:116.2px;top:1508.8px;font-size:30.5px;line-height:30.5px;color:#8f9ba3;transform:scaleX(1.0831);">Personalization</span>
<div style="position:absolute;left:0px;top:0px;width:2880px;height:4px;background:#e9e9e9"></div>
<div style="position:absolute;left:0px;top:4px;width:2880px;height:128px;background:#061730;box-shadow:0 3px 9px rgba(0,0,0,.28)"></div>
<svg style="position:absolute;left:140px;top:40px" width="54" height="50" viewBox="0 0 54 50">
<path d="M24.6 3.2 L2.6 40.5 Q1.2 43.5 4.2 44.2 L24.6 32.4 Z" fill="#cc4b37" stroke="#cc4b37" stroke-width="2" stroke-linejoin="round"/>
<path d="M28.4 3.2 L50.6 40.5 Q52 43.5 49 44.2 L28.4 32.4 Z" fill="#4aa564" stroke="#4aa564" stroke-width="2" stroke-linejoin="round"/>
<path d="M26.5 35 L5.5 46.6 Q6.5 47.8 8.5 47.8 L44.5 47.8 Q46.5 47.8 47.5 46.6 Z" fill="#3b6ee8" stroke="#3b6ee8" stroke-width="1.6" stroke-linejoin="round"/>
</svg>
<svg style="position:absolute;left:190px;top:40px" width="180" height="52" viewBox="190 40 180 52">
<g fill="#efefef" fill-rule="evenodd">
<path d="M199 69.85a15.2 15.15 0 1 0 30.4 0a15.2 15.15 0 1 0 -30.4 0zM208.3 69.85a6.4 7.9 0 1 1 12.8 0a6.4 7.9 0 1 1 -12.8 0z"/>
<rect x="220.6" y="54.7" width="9.8" height="30.3"/>
<path d="M232.2 53.6L241.5 44.8V64L250.7 54.7H263.5L248.3 69.9L263.5 85H250.9L241.5 75.6V85H232.2z"/>
<path d="M260.3 69.85a15.2 15.15 0 1 0 30.4 0a15.2 15.15 0 1 0 -30.4 0zM269.6 69.85a6.4 7.9 0 1 1 12.8 0a6.4 7.9 0 1 1 -12.8 0z"/>
<rect x="282" y="54.7" width="9.9" height="30.3"/>
</g>
<g fill="none" stroke="#efefef" stroke-width="9.9">
<path d="M298.85 54.7V70.2A9.9 9.9 0 0 0 318.65 70.2M318.65 54.7V85"/>
<path d="M330.85 85V54.7M330.85 69.5A10.2 10.2 0 0 1 351.25 69.5V85"/>
</g></svg>
<svg style="position:absolute;left:2760px;top:28.8px" width="32.2" height="32.2" viewBox="0 0 32.2 32.2">
<defs><clipPath id="bi"><path d="M0 0H22.8L32.2 8.7V32.2H0Z"/></clipPath>
<linearGradient id="big" x1="0" y1="0" x2="0" y2="1"><stop offset="0" stop-color="#d8e3f8"/><stop offset="1" stop-color="#c3d1ef"/></linearGradient></defs>
<g clip-path="url(#bi)"><rect width="32.2" height="32.2" fill="url(#big)"/>
<circle cx="10.3" cy="9.6" r="3.3" fill="#fff"/><circle cx="13.4" cy="10.8" r="2.4" fill="#fff"/><ellipse cx="9.6" cy="11.4" rx="5.6" ry="1.9" fill="#fff"/>
<path d="M0.8 32.2Q6.5 20 15 20Q23.5 20 31.2 32.2Z" fill="#72b14e"/>
<path d="M0.6 0.6H22.6L31.6 9V31.6H0.6Z" fill="none" stroke="#a6a6a6" stroke-width="1.2"/>
<path d="M22.8 0V8.7H32.2Z" fill="#f6f6f6" stroke="#b5b5b5" stroke-width=".8"/>
<path d="M32.2 16.3V22.3L20.3 32.2H13.8Z" fill="#061730"/>
</g></svg>
<span class="t" style="left:2792.5px;top:52.5px;font-size:29.5px;line-height:29.5px;color:#010711;-webkit-text-stroke:0.7px #010711;transform:scaleX(1.0460);">user</span>
</div></body></html>
